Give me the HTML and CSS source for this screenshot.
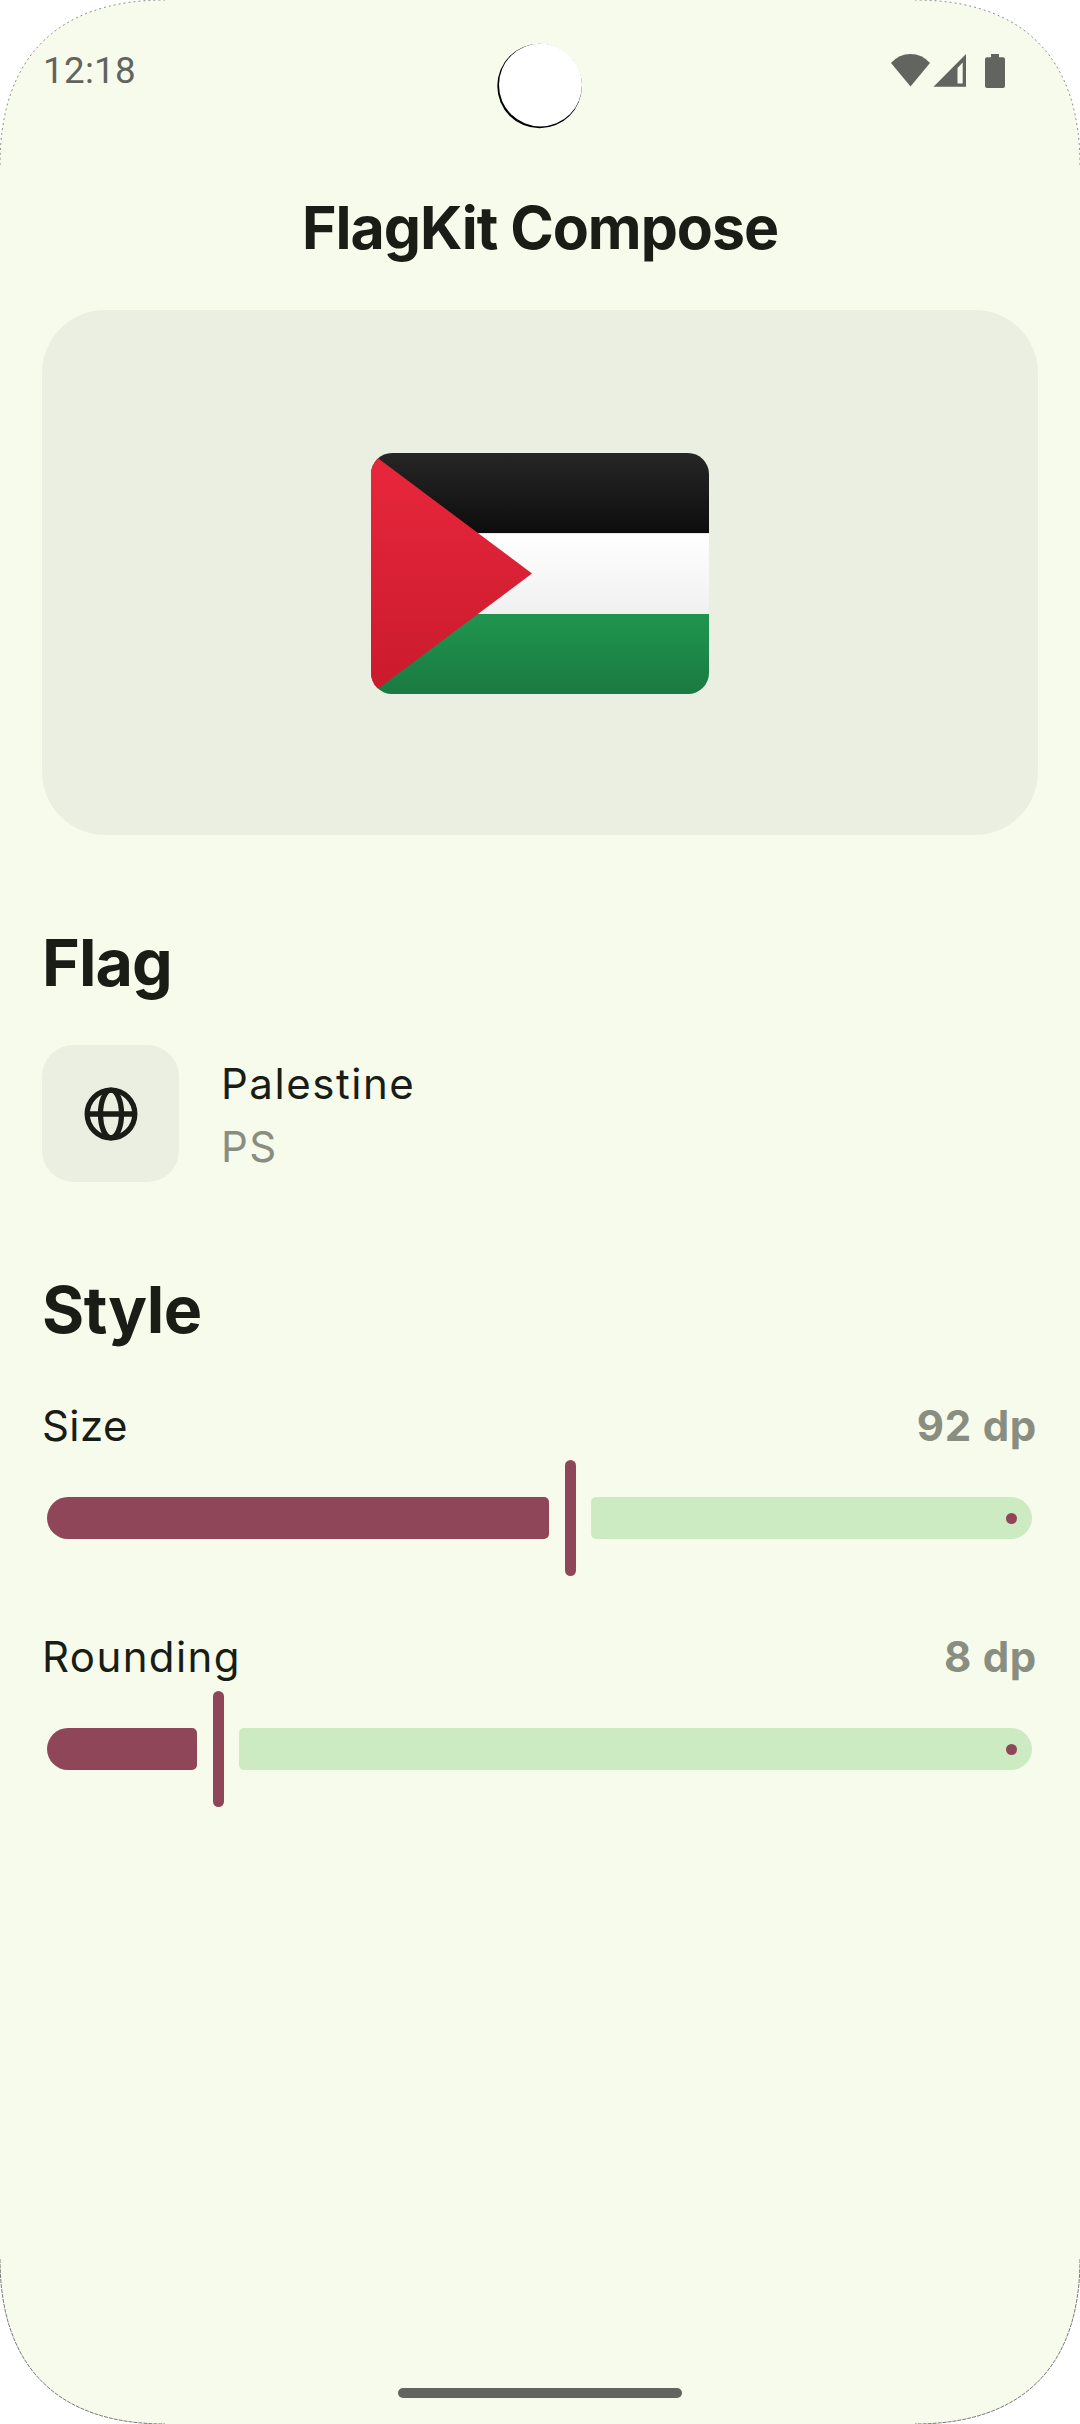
FILE: index.html
```html
<!DOCTYPE html>
<html lang="en">
<head>
<meta charset="utf-8">
<title>FlagKit Compose</title>
<link rel="stylesheet" href="styles.css">
</head>
<body>
<div class="screen">
  <header class="status">
    <span class="clock">12:18</span>
    <svg class="status-icons" width="116" height="36" viewBox="890 53 116 36">
      <path d="M891 63Q899 54 910.500 54T930 63L910.500 86.500Z"/>
      <path fill-rule="evenodd" d="M933.500 86.700L966 54V86.700ZM957.500 83.500H962.700V62.500L957.500 68Z"/>
      <path d="M991 54H999V57.300H1003Q1005 57.300 1005 59.300V86Q1005 88 1003 88H987Q985 88 985 86V59.300Q985 57.300 987 57.300H991Z"/>
    </svg>
  </header>
  <h1 class="title"><span>FlagKit Compose</span></h1>
  <main>
    <div class="preview">
      <svg class="flag" width="338" height="241" viewBox="0 0 338 241">
        <defs>
          <linearGradient id="black" x2="0" y2="1"><stop stop-color="#262626"/><stop offset="1" stop-color="#0d0d0d"/></linearGradient>
          <linearGradient id="white" x2="0" y2="1"><stop stop-color="#fff"/><stop offset="1" stop-color="#f0f0f0"/></linearGradient>
          <linearGradient id="green" x2="0" y2="1"><stop stop-color="#20954f"/><stop offset="1" stop-color="#1a7a41"/></linearGradient>
          <linearGradient id="red" x2="0" y2="1"><stop stop-color="#e9273d"/><stop offset="1" stop-color="#ca1a2c"/></linearGradient>
        </defs>
        <rect width="338" height="80.300" fill="url(#black)"/>
        <rect y="80.300" width="338" height="80.700" fill="url(#white)"/>
        <rect y="161" width="338" height="80" fill="url(#green)"/>
        <path d="M0 0L161 120.500L0 241Z" fill="url(#red)"/>
      </svg>
    </div>
    <h2 class="heading heading-flag"><span>Flag</span></h2>
    <div class="country">
      <div class="country-icon">
        <svg width="54" height="54" viewBox="-27 -27 54 54">
          <circle r="23.800"/><ellipse rx="10.500" ry="23.800"/><path d="M-23.800 0H23.800"/>
        </svg>
      </div>
      <div class="country-text">
        <div class="line name"><span>Palestine</span></div>
        <div class="line code"><span>PS</span></div>
      </div>
    </div>
    <h2 class="heading heading-style"><span>Style</span></h2>
    <section class="control">
      <div class="line row"><span class="size">Size</span><span class="value">92 dp</span></div>
      <div class="slider"><i class="active" style="width:502px"></i><i class="thumb"></i><i class="rest"><b></b></i></div>
    </section>
    <section class="control">
      <div class="line row"><span class="rounding">Rounding</span><span class="value value-short">8 dp</span></div>
      <div class="slider"><i class="active" style="width:150px"></i><i class="thumb"></i><i class="rest"><b></b></i></div>
    </section>
  </main>
  <div class="home-bar"></div>
  <svg class="camera" width="88" height="88" viewBox="496 42 88 88">
    <circle cx="539.600" cy="86" r="42.300"/><circle class="lens" cx="540.500" cy="85" r="41.500"/>
  </svg>
  <svg class="corner tl" width="166" height="166"><path class="cut" d="M0 0V165C0 57.500 57.500 0 165 0Z"/><path class="edge" d="M0 165C0 57.500 57.500 0 165 0"/></svg>
  <svg class="corner tr" width="166" height="166"><path class="cut" d="M0 0V165C0 57.500 57.500 0 165 0Z"/><path class="edge" d="M0 165C0 57.500 57.500 0 165 0"/></svg>
  <svg class="corner bl" width="166" height="166"><path class="cut" d="M0 0V165C0 57.500 57.500 0 165 0Z"/><path class="edge" d="M0 165C0 57.500 57.500 0 165 0"/></svg>
  <svg class="corner br" width="166" height="166"><path class="cut" d="M0 0V165C0 57.500 57.500 0 165 0Z"/><path class="edge" d="M0 165C0 57.500 57.500 0 165 0"/></svg>
</div>
</body>
</html>
```
FILE: styles.css
```css
* { box-sizing: border-box; }
body { margin: 0; background: #fff; }
.screen {
  position: relative;
  width: 1080px;
  height: 2424px;
  overflow: hidden;
  background: #f7fbec;
  color: #191d16;
  font-family: Inter, "Liberation Sans", sans-serif;
  display: flex;
  flex-direction: column;
}
.status {
  height: 142px;
  flex: none;
  padding: 0 74px 0 43px;
  display: flex;
  justify-content: space-between;
  align-items: center;
  color: #62655f;
}
.clock { font: 36.75px/44px Roboto, sans-serif; letter-spacing: .3px; }
.status-icons { fill: #62655f; }
.title {
  margin: 0;
  height: 168px;
  flex: none;
  text-align: center;
  font-size: 59px;
  line-height: 171px;
  font-weight: 700;
  letter-spacing: -1.05px;
  white-space: nowrap;
}
main { padding: 0 42px; }
.preview {
  height: 525px;
  padding-top: 2px;
  border-radius: 63px;
  background: #ebefe1;
  display: flex;
  align-items: center;
  justify-content: center;
}
.flag { display: block; border-radius: 21px; }
.heading {
  margin: 0;
  font-size: 64.5px;
  line-height: 80px;
  font-weight: 700;
}
.heading-flag { padding-top: 88px; height: 210px; letter-spacing: -.9px; }
.heading-style { padding-top: 88px; height: 210px; letter-spacing: -.5px; }
.country { display: flex; gap: 42px; align-items: center; height: 137px; }
.country-text { padding-top: 3px; }
.country-icon {
  width: 137px;
  height: 137px;
  border-radius: 31.5px;
  background: #ebefe1;
  display: flex;
  align-items: center;
  justify-content: center;
}
.country-icon svg { fill: none; stroke: #191d16; stroke-width: 5.3; }
.line { font-size: 42px; line-height: 63px; white-space: nowrap; }
.name { letter-spacing: 1.55px; }
.code { color: #898e80; letter-spacing: 1.5px; }
.row { display: flex; justify-content: space-between; padding-top: 2px; }
.size { letter-spacing: .4px; }
.rounding { letter-spacing: 1.4px; }
.value { font-weight: 700; color: #898e80; letter-spacing: .7px; padding-right: 1px; }
.control { height: 231px; }
.slider { display: flex; align-items: center; height: 116px; margin-top: 3px; padding: 0 6px 0 5px; }
.active, .rest { height: 42px; background: #904659; border-radius: 21px 5px 5px 21px; }
.active { flex: none; }
.thumb { flex: none; width: 11px; height: 116px; margin: 0 15px 0 16px; border-radius: 5.5px; background: #904659; }
.rest {
  flex: 1;
  background: #cdebc3;
  border-radius: 5px 21px 21px 5px;
  display: flex;
  align-items: center;
  justify-content: flex-end;
  padding-right: 15.5px;
}
.rest b { width: 11px; height: 11px; border-radius: 50%; background: #904659; }
.home-bar { width: 284px; height: 10px; border-radius: 5px; background: #62655f; margin: auto auto 26px; }
.camera { position: absolute; left: 496px; top: 42px; }
.lens { fill: #fff; }
.corner { position: absolute; }
.cut { fill: #fff; }
.edge { fill: none; stroke: #222; stroke-width: .5; stroke-dasharray: 2 3; }
.tl { left: 0; top: 0; }
.tr { right: 0; top: 0; transform: scaleX(-1); }
.bl { left: 0; bottom: 0; transform: scaleY(-1); }
.br { right: 0; bottom: 0; transform: scale(-1); }
.bl .edge, .br .edge { stroke-dasharray: 4 1; stroke-width: .6; }
```
